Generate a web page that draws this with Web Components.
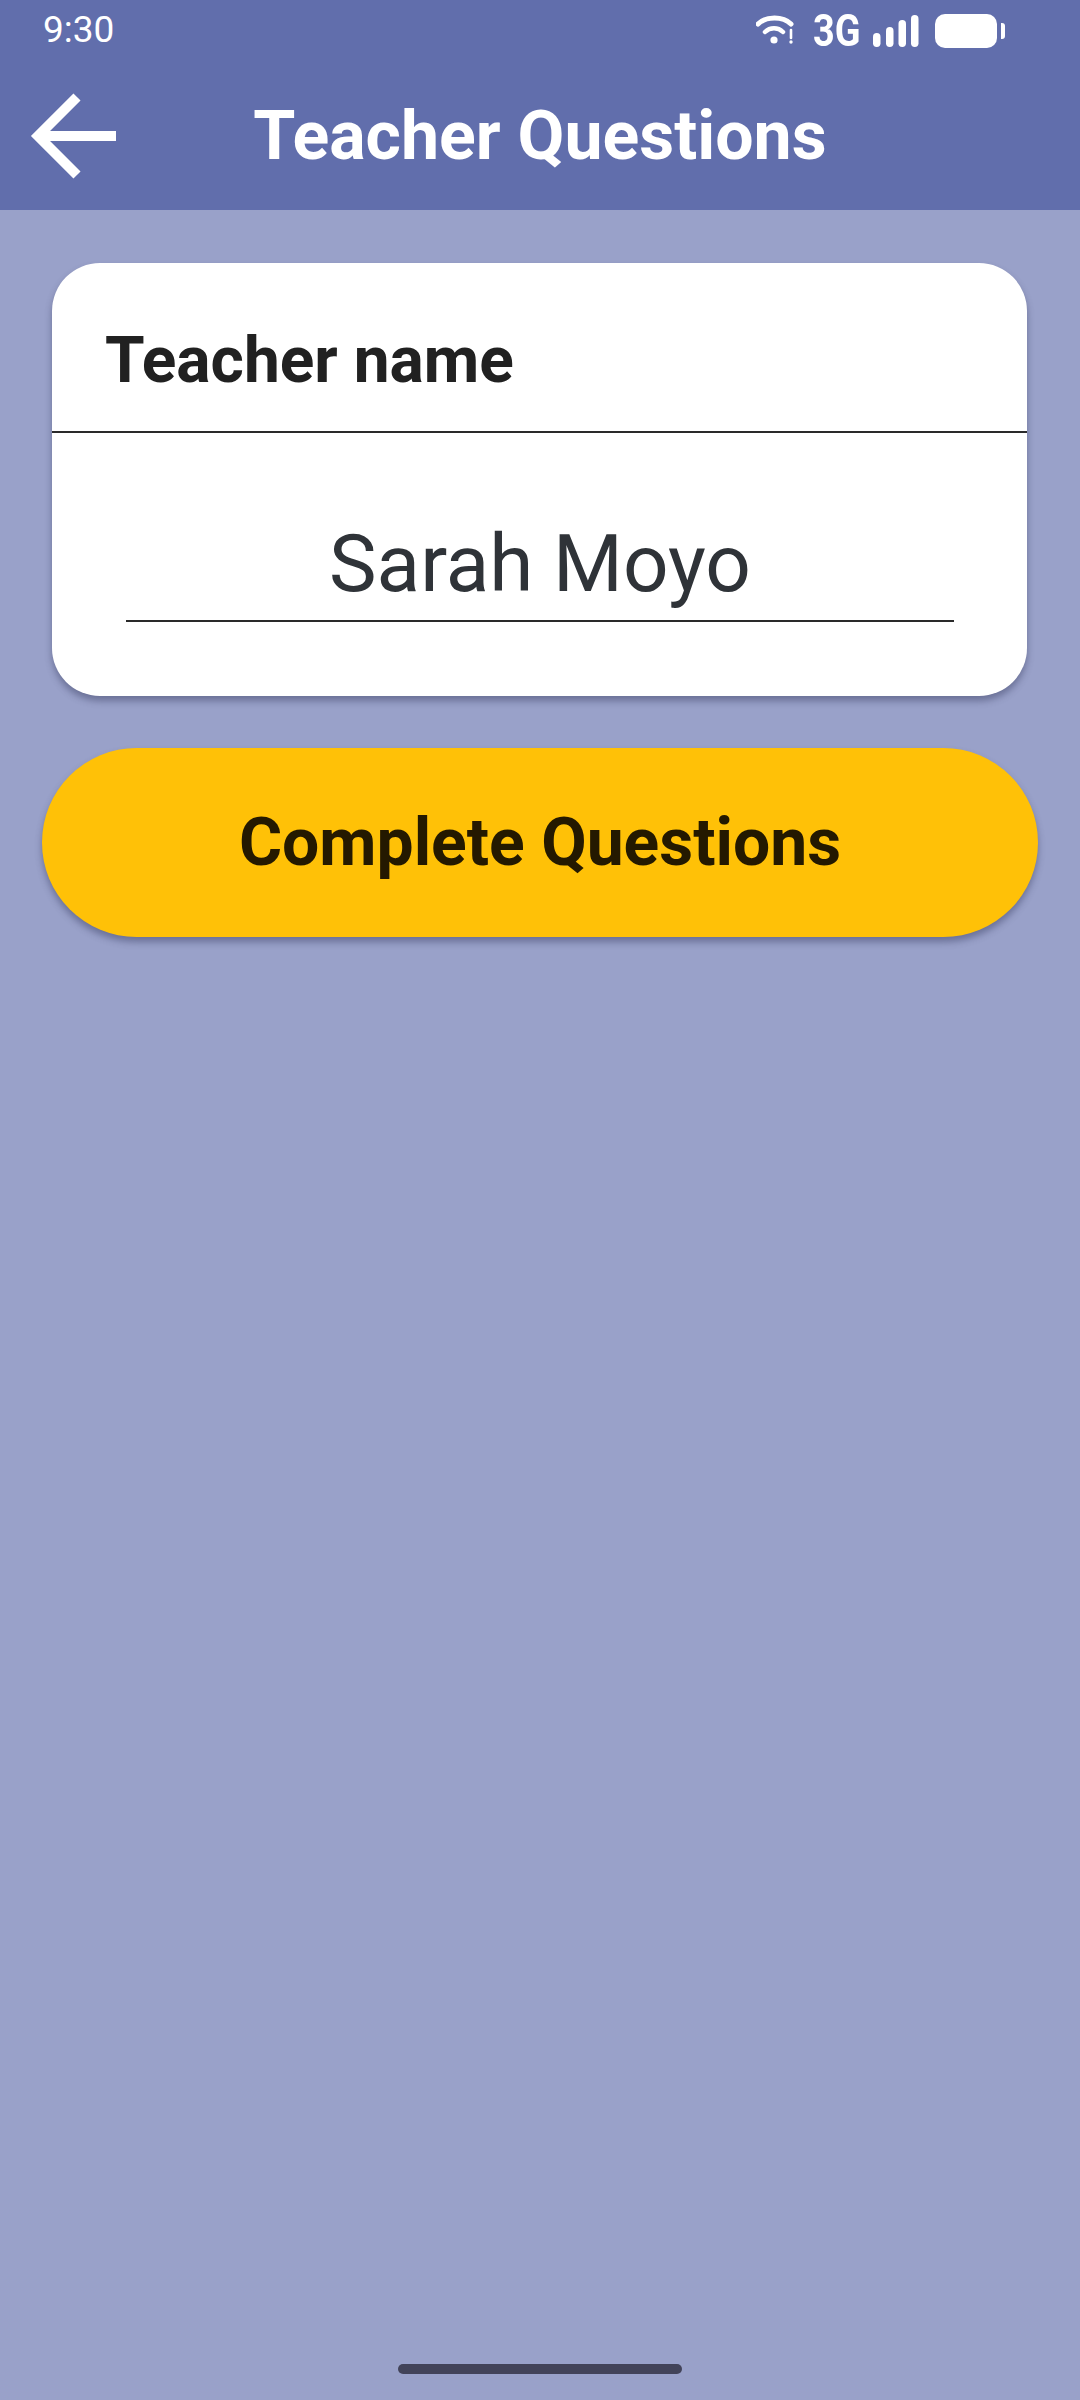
<!DOCTYPE html>
<html>
<head>
<meta charset="utf-8">
<title>Teacher Questions</title>
<style>
  html, body { margin: 0; padding: 0; height: 100%; }
  body { background: #99a1c9; font-family: Roboto, "Liberation Sans", sans-serif; }
</style>
</head>
<body>
<teacher-page>
  <status-bar time="9:30"></status-bar>
  <app-bar>Teacher Questions</app-bar>
  <name-card label="Teacher name">Sarah Moyo</name-card>
  <pill-button>Complete Questions</pill-button>
</teacher-page>

<script>
class TeacherPage extends HTMLElement {
  constructor() {
    super();
    this.attachShadow({mode: 'open'}).innerHTML = `
      <style>
        :host { display: flex; flex-direction: column; height: 2400px; background: #99a1c9; }
        .top { background: #616eac; }
        .content { flex: 1; display: flex; flex-direction: column; }
        .pill { align-self: center; width: 284px; height: 10px; border-radius: 5px; background: #424359; margin-bottom: 26px; }
      </style>
      <div class="top">
        <slot name="bars"></slot>
      </div>
      <div class="content"><slot></slot></div>
      <div class="pill"></div>
    `;
  }
  connectedCallback() {
    this.querySelectorAll('status-bar, app-bar').forEach(el => el.slot = 'bars');
  }
}

class StatusBar extends HTMLElement {
  constructor() {
    super();
    this.attachShadow({mode: 'open'});
  }
  connectedCallback() {
    this.shadowRoot.innerHTML = `
      <style>
        :host { display: flex; align-items: flex-start; justify-content: space-between; height: 60px; padding: 0 75px 0 43px; color: #fff; }
        .time { font: 400 37px/41px Roboto, sans-serif; margin-top: 9px; }
        .icons { display: flex; align-items: flex-start; padding-top: 14px; }
        svg { display: block; }
        .net { font: 700 44px/34px Roboto, sans-serif; width: 46px; margin: 0 14px 0 19px; transform: scaleX(.86); transform-origin: left top; white-space: nowrap; }
      </style>
      <span class="time">${this.getAttribute('time')}</span>
      <div class="icons">
        <svg width="38" height="34" viewBox="0 0 38 34" fill="none" stroke="#fff" stroke-linecap="round">
          <path d="M2 10 C10 2 27 2 35 10" stroke-width="5"/>
          <path d="M9 18 C14 13 22 13 27 18" stroke-width="4.5"/>
          <circle cx="18" cy="26" r="3.6" fill="#fff" stroke="none"/>
          <path d="M35 16 V24" stroke-width="2.6"/>
          <circle cx="35" cy="28" r="1.7" fill="#fff" stroke="none"/>
        </svg>
        <span class="net">3G</span>
        <svg width="46" height="34" viewBox="0 0 46 34" fill="#fff">
          <rect x="0" y="19" width="7.5" height="14" rx="3.7"/>
          <rect x="13" y="13" width="7.5" height="20" rx="3.7"/>
          <rect x="25.5" y="6" width="7.5" height="27" rx="3.7"/>
          <rect x="38" y="1" width="7.5" height="32" rx="3.7"/>
        </svg>
        <svg style="margin-left:16px" width="70" height="34" viewBox="0 0 70 34" fill="#fff">
          <rect x="0" y="0" width="62" height="34" rx="10"/>
          <path d="M66 9 h1 a3 3 0 0 1 3 3 v10 a3 3 0 0 1 -3 3 h-1 z"/>
        </svg>
      </div>
    `;
  }
}

class AppBar extends HTMLElement {
  constructor() {
    super();
    this.attachShadow({mode: 'open'}).innerHTML = `
      <style>
        :host { display: grid; grid-template-columns: 1fr auto 1fr; align-items: center; height: 150px; color: #fff; }
        .back { padding: 2px 0 0 28px; display: flex; }
        svg { display: block; filter: blur(.7px); }
        .title { font: 700 68px/80px Roboto, sans-serif; padding-top: 2px; }
      </style>
      <div class="back">
        <svg width="90" height="90" viewBox="0 0 90 90" fill="none" stroke="#fff" stroke-width="10">
          <path d="M88 45 H10"/>
          <path d="M49 6 L10 45 L49 84"/>
        </svg>
      </div>
      <div class="title"><slot></slot></div>
      <div></div>
    `;
  }
}

class NameCard extends HTMLElement {
  constructor() {
    super();
    this.attachShadow({mode: 'open'});
  }
  connectedCallback() {
    this.shadowRoot.innerHTML = `
      <style>
        :host { display: block; margin: 53px 53px 0 52px; background: #fff; border-radius: 48px; box-shadow: 0 5px 7px rgba(50, 55, 90, .45); color: #212121; }
        .head { font: 700 64px/76px Roboto, sans-serif; padding: 60px 53px 32px; border-bottom: 2px solid #2a2a2a; }
        .body { padding: 84px 73px 74px 74px; }
        .value { font: 400 80px/94px Roboto, sans-serif; color: #2f3338; text-align: center; border-bottom: 2px solid #2a2a2a; padding-bottom: 9px; }
      </style>
      <div class="head">${this.getAttribute('label')}</div>
      <div class="body"><div class="value"><slot></slot></div></div>
    `;
  }
}

class PillButton extends HTMLElement {
  constructor() {
    super();
    this.attachShadow({mode: 'open'}).innerHTML = `
      <style>
        :host { display: flex; align-items: center; justify-content: center; height: 189px; margin: 52px 42px 0; border-radius: 95px; background: #ffc107; color: #241900; box-shadow: 0 5px 7px rgba(50, 55, 90, .45); font: 700 66px/78px Roboto, sans-serif; }
      </style>
      <slot></slot>
    `;
  }
}

customElements.define('teacher-page', TeacherPage);
customElements.define('status-bar', StatusBar);
customElements.define('app-bar', AppBar);
customElements.define('name-card', NameCard);
customElements.define('pill-button', PillButton);
</script>
</body>
</html>
